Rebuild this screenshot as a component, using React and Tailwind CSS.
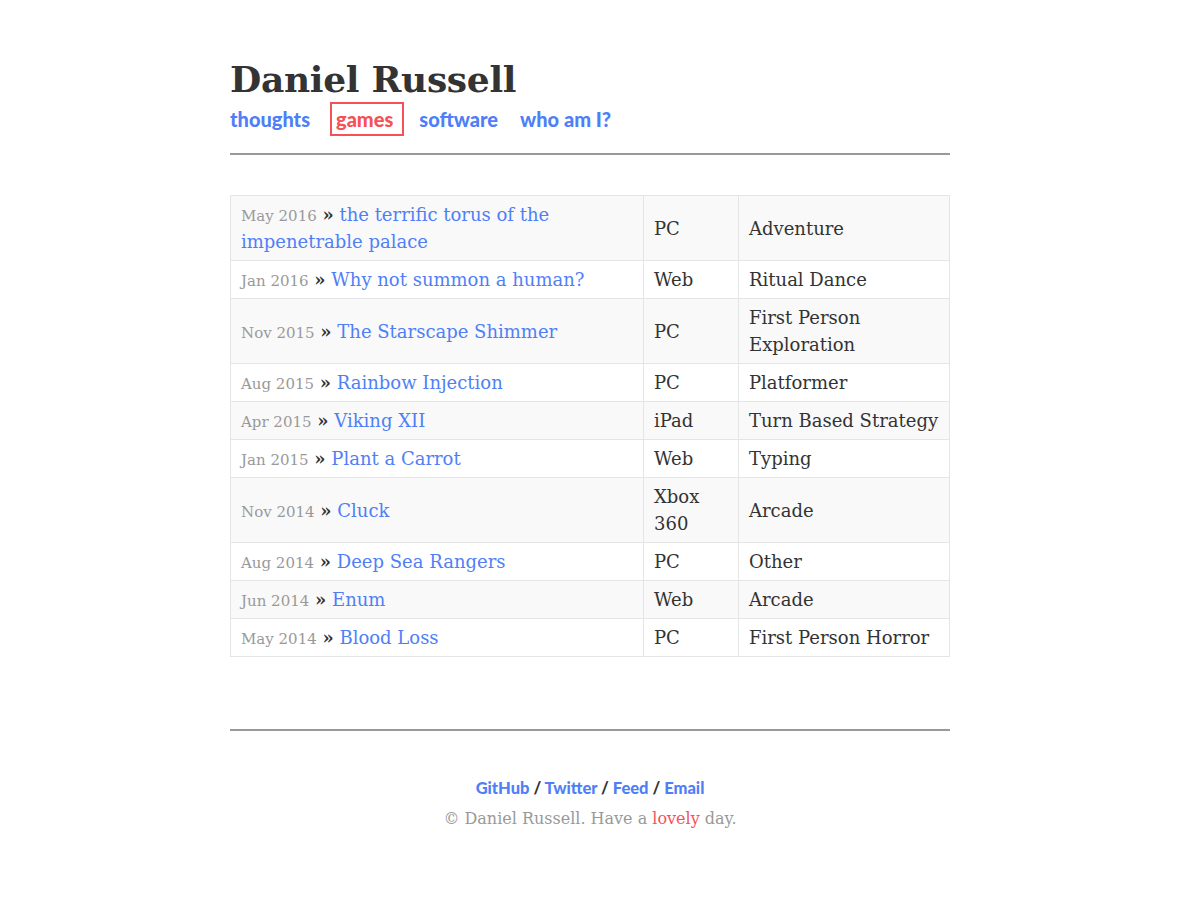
const GAMES = [
  { date: 'May 2016', title: 'the terrific torus of the impenetrable palace', platform: 'PC', genre: 'Adventure' },
  { date: 'Jan 2016', title: 'Why not summon a human?', platform: 'Web', genre: 'Ritual Dance' },
  { date: 'Nov 2015', title: 'The Starscape Shimmer', platform: 'PC', genre: 'First Person Exploration' },
  { date: 'Aug 2015', title: 'Rainbow Injection', platform: 'PC', genre: 'Platformer' },
  { date: 'Apr 2015', title: 'Viking XII', platform: 'iPad', genre: 'Turn Based Strategy' },
  { date: 'Jan 2015', title: 'Plant a Carrot', platform: 'Web', genre: 'Typing' },
  { date: 'Nov 2014', title: 'Cluck', platform: 'Xbox 360', genre: 'Arcade' },
  { date: 'Aug 2014', title: 'Deep Sea Rangers', platform: 'PC', genre: 'Other' },
  { date: 'Jun 2014', title: 'Enum', platform: 'Web', genre: 'Arcade' },
  { date: 'May 2014', title: 'Blood Loss', platform: 'PC', genre: 'First Person Horror' },
]

const serif = "font-['DejaVu_Serif',serif]"
const sans = "font-['Lato',sans-serif]"

// ── Header ─────────────────────────────────────────────────────────────────
function Header() {
  return (
    <header>
      <h1 className={`${serif} text-[36px] font-bold leading-[52px] text-[#333] tracking-[-0.3px]`}>Daniel Russell</h1>
      <nav className={`${sans} flex items-center text-[20px] font-black leading-[24px] h-[34px] mt-[-3px]`}>
        <a href="#" className="text-[#4f7ff7] mr-[20px]">thoughts</a>
        <a href="#" className="text-[#f55257] border-2 border-[#f55257] pl-[4px] pr-[9px] py-[3px] mr-[15px]">games</a>
        <a href="#" className="text-[#4f7ff7] mr-[22px]">software</a>
        <a href="#" className="text-[#4f7ff7]">who am I?</a>
      </nav>
      <hr className="mt-[17px] border-0 border-t-2 border-[#999]" />
    </header>
  )
}

// ── Games table ────────────────────────────────────────────────────────────
function GamesTable() {
  return (
    <table className={`${serif} mt-[40px] w-full table-fixed border-collapse text-[18px] leading-[27px] text-[#333]`}>
      <colgroup>
        <col className="w-[413px]" />
        <col className="w-[95px]" />
        <col />
      </colgroup>
      <tbody>
        {GAMES.map((g, i) => (
          <tr key={g.title} className={i % 2 === 0 ? 'bg-[#f9f9f9]' : 'bg-white'}>
            <td className="border border-[#e5e5e5] px-[10px] py-[5px] align-middle">
              <span className="text-[15px] leading-none text-[#999]">{g.date}</span>{' '}
              <span className="font-bold">»</span>{' '}
              <a href="#" className="text-[#4f7ff7]">{g.title}</a>
            </td>
            <td className="border border-[#e5e5e5] px-[10px] py-[5px] align-middle">{g.platform}</td>
            <td className="border border-[#e5e5e5] px-[10px] py-[5px] align-middle">{g.genre}</td>
          </tr>
        ))}
      </tbody>
    </table>
  )
}

// ── Footer ─────────────────────────────────────────────────────────────────
function Footer() {
  return (
    <footer className="mt-[72px]">
      <hr className="border-0 border-t-2 border-[#999]" />
      <div className="mt-[45px] text-center">
        <p className={`${sans} text-[16.5px] font-black leading-[24px] text-[#333]`}>
          <a href="#" className="text-[#4f7ff7]">GitHub</a> / <a href="#" className="text-[#4f7ff7]">Twitter</a> /{' '}
          <a href="#" className="text-[#4f7ff7]">Feed</a> / <a href="#" className="text-[#4f7ff7]">Email</a>
        </p>
        <p className={`${serif} mt-[7px] text-[16px] leading-[24px] text-[#999]`}>
          © Daniel Russell. Have a <span className="text-[#f55257]">lovely</span> day.
        </p>
      </div>
    </footer>
  )
}

export default function App() {
  return (
    <div className="min-h-screen bg-white">
      <div className="w-[1180px]">
        <div className="mx-auto w-[720px] pt-[53px] pb-[60px]">
          <Header />
          <GamesTable />
          <Footer />
        </div>
      </div>
    </div>
  )
}
